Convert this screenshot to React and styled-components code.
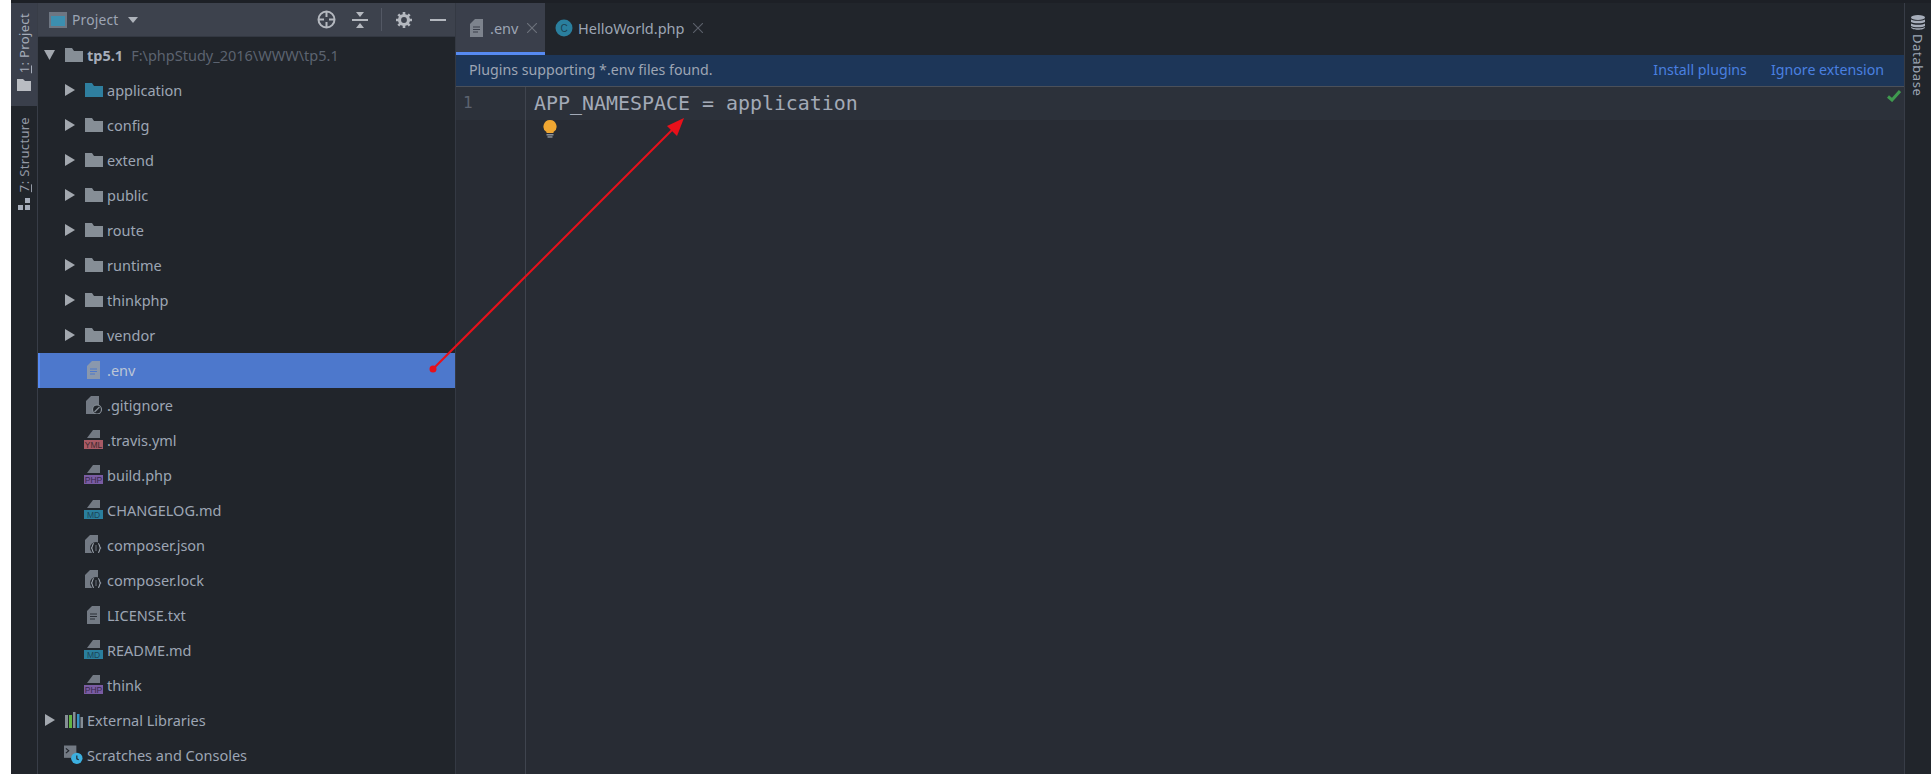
import React from 'react';
import styled, { createGlobalStyle } from 'styled-components';

const GlobalStyle = createGlobalStyle`
  html, body {
    margin: 0;
    padding: 0;
    background: #fff;
    overflow: hidden;
  }
`;

const Page = styled.div`
  position: relative;
  width: 1931px;
  height: 774px;
  padding-left: 11px;
  box-sizing: border-box;
  overflow: hidden;
  font-family: "Noto Sans", "Open Sans", sans-serif;
`;

const Ide = styled.div`
  display: flex;
  height: 100%;
  padding-top: 3px;
  box-sizing: border-box;
  background: #1d2026;
`;

const Rail = styled.div`
  width: 26px;
  flex: none;
  display: flex;
  flex-direction: column;
  background: #21252b;
  border-${(p) => (p.$right ? 'left' : 'right')}: 1px solid #383d47;
`;

const RailTab = styled.div`
  height: ${(p) => p.$h}px;
  display: flex;
  flex-direction: column-reverse;
  align-items: center;
  gap: 6px;
  padding-bottom: ${(p) => p.$pb || 0}px;
  box-sizing: border-box;
  background: ${(p) => (p.$active ? '#3a3f4b' : 'transparent')};
  color: ${(p) => (p.$active ? '#a6adba' : '#949aa6')};
`;

const RailLabel = styled.span`
  writing-mode: vertical-rl;
  transform: rotate(180deg);
  font-size: 13px;
  line-height: 16px;
  letter-spacing: 0.35px;
  white-space: nowrap;
`;

const RightTab = styled.div`
  display: flex;
  flex-direction: column;
  align-items: center;
  gap: 4px;
  padding-top: 12px;
  color: #9da5b4;
`;

const RightLabel = styled.span`
  writing-mode: vertical-rl;
  font-size: 13px;
  line-height: 16px;
  letter-spacing: 0.6px;
`;

const Sidebar = styled.aside`
  width: 417px;
  flex: none;
  background: #21252b;
  border-right: 1px solid #343943;
`;

const SidebarHeader = styled.div`
  height: 33px;
  padding: 0 9px 0 10px;
  display: flex;
  align-items: center;
  background: #3d424d;
  color: #9da5b4;
  font-size: 13.8px;
  border-bottom: 1px solid #333842;
  border-left: 1px solid #3d424d;
`;

const HeaderTitle = styled.span`
  margin-left: 5px;
  letter-spacing: 0.2px;
`;

const HeaderCaret = styled.span`
  width: 0;
  height: 0;
  margin-left: 10px;
  border-left: 5.5px solid transparent;
  border-right: 5.5px solid transparent;
  border-top: 6px solid #aeb3bb;
`;

const HeaderTools = styled.div`
  margin-left: auto;
  display: flex;
  align-items: center;
`;

const Tool = styled.span`
  display: flex;
  margin-left: ${(p) => p.$ml || 0}px;
`;

const ToolDivider = styled.span`
  width: 1px;
  height: 23px;
  margin-left: 13px;
  background: #535864;
`;

const Tree = styled.div`
  padding-top: 1px;
`;

const Row = styled.div`
  height: 35px;
  box-sizing: border-box;
  padding-bottom: 2px;
  display: flex;
  align-items: center;
  padding-left: ${(p) => p.$indent}px;
  font-size: 14.5px;
  color: ${(p) => (p.$selected ? '#bcc6d6' : '#9da5b4')};
  white-space: nowrap;
  background: ${(p) => (p.$selected ? '#4d78cc' : 'transparent')};
  box-shadow: ${(p) => (p.$selected ? 'inset 2px 0 0 #568af2' : 'none')};
`;

const Arrow = styled.span`
  width: 20px;
  flex: none;
  display: flex;
  align-items: center;
`;

const IconSlot = styled.span`
  width: 19px;
  height: 20px;
  flex: none;
  display: flex;
  align-items: center;
  justify-content: center;
  margin-right: 4px;
`;

const Bold = styled.b`
  font-weight: 700;
  color: #a6adba;
`;

const Hint = styled.span`
  margin-left: 8px;
  color: #5c6370;
`;

const Main = styled.main`
  flex: 1;
  min-width: 0;
  display: flex;
  flex-direction: column;
  background: #282c34;
`;

const TabBar = styled.div`
  height: 52px;
  flex: none;
  display: flex;
  background: #21252b;
`;

const Tab = styled.div`
  display: flex;
  align-items: center;
  height: 52px;
  box-sizing: border-box;
  width: ${(p) => p.$w}px;
  padding-left: ${(p) => p.$pl}px;
  padding-top: 1px;
  background: ${(p) => (p.$active ? '#3a3f4b' : 'transparent')};
  border-bottom: 3px solid ${(p) => (p.$active ? '#568af2' : 'transparent')};
  color: #9da5b4;
  font-size: 14.5px;
`;

const TabName = styled.span`
  margin-left: ${(p) => p.$ml}px;
  margin-right: 9px;
`;

const Banner = styled.div`
  height: 32px;
  box-sizing: border-box;
  flex: none;
  display: flex;
  align-items: center;
  padding: 0 20px 2px 13px;
  background: #1d3658;
  border-bottom: 1px solid #4b5059;
  color: #9da5b4;
  font-size: 14.2px;
`;

const BannerLinks = styled.div`
  margin-left: auto;
  display: flex;
  gap: 24px;
  color: #4a80e0;
`;

const Editor = styled.div`
  flex: 1;
  display: flex;
  position: relative;
`;

const Gutter = styled.div`
  width: 69px;
  flex: none;
  border-right: 1px solid #3f444e;
`;

const LineNumber = styled.div`
  height: 33px;
  line-height: 32px;
  padding-left: 7px;
  font-family: "DejaVu Sans Mono", monospace;
  font-size: 16px;
  color: #5c6370;
  background: #2c313a;
`;

const Code = styled.div`
  flex: 1;
  min-width: 0;
`;

const CodeLine = styled.div`
  height: 33px;
  line-height: 34px;
  padding-left: 8px;
  font-family: "DejaVu Sans Mono", monospace;
  font-size: 19.93px;
  color: #a3aab7;
  background: #2c313a;
  white-space: pre;
`;

const Bulb = styled.div`
  margin-left: 17px;
  line-height: 0;
`;

const Check = styled.div`
  position: absolute;
  top: 3px;
  right: 3px;
  line-height: 0;
`;

const Overlay = styled.svg`
  position: absolute;
  left: 0;
  top: 0;
  pointer-events: none;
`;

const Folder = ({ color = '#868e96' }) => (
  <svg width="18" height="14" viewBox="0 0 18 14">
    <path d="M0 0h7l2 3h9v11H0z" fill={color} />
  </svg>
);

const Caret = ({ open }) => (
  <svg width="11" height="12" viewBox="0 0 11 12">
    <path d={open ? 'M0 1h11L5.500 11z' : 'M1 0l10 6-10 6z'} fill="#a3a8af" />
  </svg>
);

const TextFile = ({ fill = '#737a84', lines = '#2b2f37' }) => (
  <svg width="13" height="18" viewBox="0 0 13 18">
    <path d="M5 0h8v18H0V5z" fill={fill} />
    <path d="M3 8h7M3 10.500h7M3 13h5" stroke={lines} strokeWidth="1.200" />
  </svg>
);

const BadgeFile = ({ label, color, ink }) => (
  <svg width="19" height="19" viewBox="0 0 19 19">
    <path d="M9 0h7v8H3z" fill="#737a84" />
    <rect x="0" y="10" width="19" height="9" fill={color} />
    <text x="9.500" y="17.800" textAnchor="middle" fontFamily="Liberation Sans, sans-serif" fontSize="8.500" fill={ink}>{label}</text>
  </svg>
);

const IgnoreFile = () => (
  <svg width="16" height="18" viewBox="0 0 16 18">
    <path d="M5 0h8v18H0V5z" fill="#737a84" />
    <circle cx="11" cy="13.500" r="4.500" fill="#21252b" stroke="#868e96" strokeWidth="1.200" />
    <path d="M8.500 16 13.500 11" stroke="#868e96" strokeWidth="1.200" />
  </svg>
);

const JsonFile = () => (
  <svg width="17" height="19" viewBox="0 0 17 19">
    <path d="M5 0h8v18H0V5z" fill="#737a84" />
    <circle cx="11" cy="13" r="6" fill="#21252b" />
    <path d="M9 8.500c-2 0-1 3.500-2.500 4.500C8 14 7 17.500 9 17.500M13 8.500c2 0 1 3.500 2.500 4.500C14 14 15 17.500 13 17.500" stroke="#9aa1ab" strokeWidth="1.100" fill="none" />
    <path d="M11 10v6" stroke="#6e747e" strokeWidth="1" />
  </svg>
);

const Libraries = () => (
  <svg width="18" height="16" viewBox="0 0 18 16">
    <rect x="0" y="3" width="3" height="13" fill="#868e96" />
    <rect x="4" y="3" width="3" height="13" fill="#62b543" />
    <rect x="8" y="0" width="2.500" height="16" fill="#868e96" />
    <rect x="12" y="2" width="2.500" height="14" fill="#3592c4" />
    <rect x="15.500" y="5" width="2.500" height="11" fill="#868e96" />
  </svg>
);

const Scratches = () => (
  <svg width="20" height="20" viewBox="0 0 20 20">
    <path d="M0 0h13v13H0z" fill="#737a84" />
    <path d="M2 3l3 2.500L2 8" stroke="#21252b" strokeWidth="1.200" fill="none" />
    <circle cx="13.500" cy="13.500" r="6" fill="#3cb0e0" />
    <path d="M13.500 10.500v3.500l2 1" stroke="#21252b" strokeWidth="1.200" fill="none" />
  </svg>
);

const ICONS = {
  text: <TextFile />,
  ignore: <IgnoreFile />,
  yml: <BadgeFile label="YML" color="#a85a65" ink="#3b2a30" />,
  php: <BadgeFile label="PHP" color="#7a5ca3" ink="#35294a" />,
  md: <BadgeFile label="MD" color="#2a7f9e" ink="#1c4457" />,
  json: <JsonFile />,
};

const folders = ['application', 'config', 'extend', 'public', 'route', 'runtime', 'thinkphp', 'vendor'];

const files = [
  ['.env', 'text'],
  ['.gitignore', 'ignore'],
  ['.travis.yml', 'yml'],
  ['build.php', 'php'],
  ['CHANGELOG.md', 'md'],
  ['composer.json', 'json'],
  ['composer.lock', 'json'],
  ['LICENSE.txt', 'text'],
  ['README.md', 'md'],
  ['think', 'php'],
];

const ProjectTree = () => (
  <Tree>
    <Row $indent={6}>
      <Arrow><Caret open /></Arrow>
      <IconSlot><Folder /></IconSlot>
      <Bold>tp5.1</Bold>
      <Hint>F:\phpStudy_2016\WWW\tp5.1</Hint>
    </Row>
    {folders.map((name) => (
      <Row key={name} $indent={26}>
        <Arrow><Caret /></Arrow>
        <IconSlot><Folder color={name === 'application' ? '#2f7f9f' : undefined} /></IconSlot>
        {name}
      </Row>
    ))}
    {files.map(([name, icon]) => (
      <Row key={name} $indent={46} $selected={name === '.env'}>
        <IconSlot>
          {name === '.env' ? <TextFile fill="#8a98ad" lines="#4d78cc" /> : ICONS[icon]}
        </IconSlot>
        {name}
      </Row>
    ))}
    <Row $indent={6}>
      <Arrow><Caret /></Arrow>
      <IconSlot><Libraries /></IconSlot>
      External Libraries
    </Row>
    <Row $indent={26}>
      <IconSlot><Scratches /></IconSlot>
      Scratches and Consoles
    </Row>
  </Tree>
);

const App = () => (
  <Page>
    <GlobalStyle />
    <Ide>
      <Rail>
        <RailTab $active $h={103} $pb={15}>
          <svg width="14" height="12" viewBox="0 0 14 12"><path d="M0 0h6l2 2h6v10H0z" fill="#b9bcc2" /></svg>
          <RailLabel><u>1</u>: Project</RailLabel>
        </RailTab>
        <RailTab $h={106} $pb={2}>
          <svg width="12" height="12" viewBox="0 0 12 12">
            <rect x="7" y="0" width="5" height="5" fill="#a6adba" />
            <rect x="0" y="7" width="5" height="5" fill="#a6adba" />
            <rect x="7" y="7" width="5" height="5" fill="#a6adba" />
          </svg>
          <RailLabel><u>7</u>: Structure</RailLabel>
        </RailTab>
      </Rail>
      <Sidebar>
        <SidebarHeader>
          <svg width="18" height="16" viewBox="0 0 18 16">
            <rect x="0" y="0" width="18" height="16" fill="#6e7682" />
            <rect x="2" y="4" width="14" height="10" fill="#3c8fb0" />
          </svg>
          <HeaderTitle>Project</HeaderTitle>
          <HeaderCaret />
          <HeaderTools>
            <Tool>
              <svg width="19" height="19" viewBox="0 0 19 19" fill="none" stroke="#b4b8bf" strokeWidth="2">
                <circle cx="9.500" cy="9.500" r="8" />
                <path d="M9.500 2v5M9.500 12v5M2 9.500h5M12 9.500h5" />
              </svg>
            </Tool>
            <Tool $ml={16}>
              <svg width="16" height="16" viewBox="0 0 16 16" fill="#b4b8bf">
                <path d="M0 7h16v2H0zM4 0h8L8 5zM8 11l4 5H4z" />
              </svg>
            </Tool>
            <ToolDivider />
            <Tool $ml={14}>
              <svg width="16" height="16" viewBox="0 0 16 16">
                <circle cx="8" cy="8" r="4.500" fill="none" stroke="#b4b8bf" strokeWidth="3.200" />
                <path d="M8 0v3M8 13v3M0 8h3M13 8h3M2.300 2.300l2 2M11.700 11.700l2 2M2.300 13.700l2-2M11.700 4.300l2-2" stroke="#b4b8bf" strokeWidth="2.600" />
              </svg>
            </Tool>
            <Tool $ml={18}>
              <svg width="16" height="16" viewBox="0 0 16 16"><rect x="0" y="7" width="16" height="2" fill="#b4b8bf" /></svg>
            </Tool>
          </HeaderTools>
        </SidebarHeader>
        <ProjectTree />
      </Sidebar>
      <Main>
        <TabBar>
          <Tab $active $w={89} $pl={14}>
            <TextFile fill="#7d838d" lines="#3a3f4b" />
            <TabName $ml={7}>.env</TabName>
            <svg width="10" height="10" viewBox="0 0 10 10"><path d="M0 0l10 10M10 0 0 10" stroke="#6d727c" strokeWidth="1.100" /></svg>
          </Tab>
          <Tab $w={170} $pl={10}>
            <svg width="18" height="18" viewBox="0 0 18 18">
              <circle cx="9" cy="9" r="8.500" fill="#2a7f9e" />
              <text x="9" y="12.500" textAnchor="middle" fontFamily="Liberation Sans, sans-serif" fontSize="10" fill="#1c3f50">C</text>
            </svg>
            <TabName $ml={5}>HelloWorld.php</TabName>
            <svg width="10" height="10" viewBox="0 0 10 10"><path d="M0 0l10 10M10 0 0 10" stroke="#5c616b" strokeWidth="1.100" /></svg>
          </Tab>
        </TabBar>
        <Banner>
          Plugins supporting *.env files found.
          <BannerLinks>
            <span>Install plugins</span>
            <span>Ignore extension</span>
          </BannerLinks>
        </Banner>
        <Editor>
          <Gutter>
            <LineNumber>1</LineNumber>
          </Gutter>
          <Code>
            <CodeLine>APP_NAMESPACE = application</CodeLine>
            <Bulb>
              <svg width="14" height="18" viewBox="0 0 14 18">
                <path d="M7 0a6.500 6.500 0 0 1 3.500 12v1h-7v-1A6.500 6.500 0 0 1 7 0z" fill="#f0a732" />
                <rect x="3.500" y="14" width="7" height="1.500" fill="#8b8f96" />
                <rect x="4.500" y="16.200" width="5" height="1.500" fill="#8b8f96" />
              </svg>
            </Bulb>
          </Code>
          <Check>
            <svg width="14" height="12" viewBox="0 0 14 12"><path d="M1 6.500 5 10l8-9" stroke="#3f9a4f" strokeWidth="3" fill="none" /></svg>
          </Check>
        </Editor>
      </Main>
      <Rail $right>
        <RightTab>
          <svg width="14" height="15" viewBox="0 0 14 15" fill="#a6adba">
            <ellipse cx="7" cy="2.500" rx="7" ry="2.500" />
            <path d="M0 4.500c2 1.700 12 1.700 14 0v2.500c-2 1.700-12 1.700-14 0zM0 8.500c2 1.700 12 1.700 14 0V11c-2 1.700-12 1.700-14 0zM0 12c2 1.700 12 1.700 14 0v.500c-1 3-13 3-14 0z" />
          </svg>
          <RightLabel>Database</RightLabel>
        </RightTab>
      </Rail>
    </Ide>
    <Overlay width="1931" height="774" viewBox="0 0 1931 774">
      <line x1="433" y1="369" x2="672" y2="130" stroke="#e8101a" strokeWidth="2" />
      <circle cx="433" cy="369" r="3.500" fill="#e8101a" />
      <path d="M684 118 667 126 677 136z" fill="#e8101a" />
    </Overlay>
  </Page>
);

export default App;
